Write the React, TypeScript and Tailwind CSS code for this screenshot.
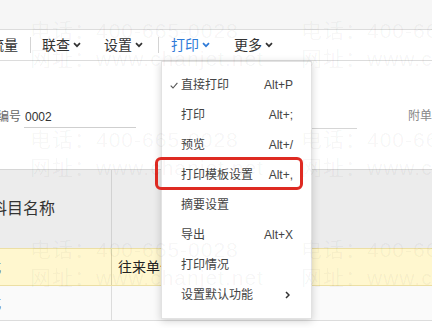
import React from "react";

const FONT = '"Liberation Sans", "Noto Sans CJK SC", sans-serif';

function Chevron({ color = "#333" }: { color?: string }) {
  return (
    <svg width="8" height="6" viewBox="0 0 8 6" className="ml-[3px]">
      <path d="M1 1.2 L4 4.2 L7 1.2" fill="none" stroke={color} strokeWidth="1.7" />
    </svg>
  );
}

function Sep() {
  return <div className="w-px h-[16px] bg-[#d4d4d4]" />;
}

type Item = { label: string; key?: string; check?: boolean; sub?: boolean };

const items: Item[] = [
  { label: "直接打印", key: "Alt+P", check: true },
  { label: "打印", key: "Alt+;" },
  { label: "预览", key: "Alt+/" },
  { label: "打印模板设置", key: "Alt+," },
  { label: "摘要设置" },
  { label: "导出", key: "Alt+X" },
  { label: "打印情况" },
  { label: "设置默认功能", sub: true },
];

function Watermark() {
  const cols = [30, 301];
  const rows = [31, 140, 250];
  return (
    <div className="absolute inset-0 pointer-events-none">
      {rows.map((y) =>
        cols.map((x) => (
          <React.Fragment key={`${x}-${y}`}>
            <div
              className="absolute whitespace-nowrap text-[21px] leading-none tracking-[1px] text-[rgba(0,0,0,0.045)]"
              style={{ left: x, top: y - 11 }}
            >
              电话：400-665-0028
            </div>
            <div
              className="absolute whitespace-nowrap text-[21px] leading-none tracking-[1px] text-[rgba(0,0,0,0.045)]"
              style={{ left: x, top: y + 28 - 11 }}
            >
              网址：www.chanjet.net
            </div>
          </React.Fragment>
        ))
      )}
    </div>
  );
}

export default function App() {
  return (
    <div
      className="relative w-[432px] h-[328px] overflow-hidden bg-white text-[#333]"
      style={{ fontFamily: FONT }}
    >
      {/* top band */}
      <div className="h-[29px] bg-[#f6f6f6]" />

      {/* toolbar */}
      <div className="h-[32px] border-y border-[#dcdcdc] flex items-center text-[14px] text-[#333] whitespace-nowrap">
        <span className="ml-[-10px]">流量</span>
        <div className="ml-[12px]"><Sep /></div>
        <span className="ml-[11px] flex items-center">联查<Chevron /></span>
        <span className="ml-[23px] flex items-center">设置<Chevron /></span>
        <div className="ml-[15px]"><Sep /></div>
        <span className="ml-[12px] flex items-center text-[#2f7bd8]">打印<Chevron color="#2f7bd8" /></span>
        <span className="ml-[24px] flex items-center">更多<Chevron /></span>
      </div>

      {/* form area */}
      <div className="h-[108px] pt-[45px] text-[12px] whitespace-nowrap">
        <div className="flex items-start">
          <div className="shrink-0 ml-[-3px] w-[27px] h-[22px] flex items-center text-[#666]">编号</div>
          <div className="shrink-0 w-[112px] h-[22px] border-b border-[#cfcfcf] flex items-center pl-[1px] text-[#333]">0002</div>
          <div className="shrink-0 ml-[44px] w-[177px] h-[23px] border-b border-[#d6d6d6]" />
          <div className="shrink-0 ml-[51px] h-[20px] flex items-center text-[#888]">附单据</div>
        </div>
      </div>

      {/* table */}
      <div className="border-t border-[#d6d6d6]">
        <div className="h-[78px] bg-[#ececec] flex">
          <div className="w-[112px] border-r border-[#d2d2d2] flex items-center">
            <span className="ml-[-9px] text-[16px] text-[#333]">科目名称</span>
          </div>
          <div className="flex-1" />
        </div>
        <div className="h-[38px] bg-[#fff7cf] border-y border-[#ecdfa4] flex">
          <div className="w-[112px] border-r border-[#d8d0a8] flex items-center overflow-hidden">
            <span className="shrink-0 ml-[-13px] text-[14px] text-[#555]">式</span>
          </div>
          <div className="flex-1 flex items-center pl-[6px] text-[14px] text-[#222]">往来单位</div>
        </div>
        <div className="h-[35px] bg-[#fafafa] border-b border-[#dcdcdc] flex">
          <div className="w-[112px] border-r border-[#dcdcdc] flex items-center overflow-hidden">
            <span className="shrink-0 ml-[-13px] text-[14px] text-[#555]">式</span>
          </div>
          <div className="flex-1" />
        </div>
      </div>

      {/* dropdown menu */}
      <div className="absolute left-[161px] top-[61px] w-[151px] bg-white border border-[#e2e2e2] shadow-[0_2px_8px_rgba(0,0,0,0.18)] py-[8px] text-[12px] text-[#444] whitespace-nowrap">
        {items.map((it) => (
          <div key={it.label} className="h-[30px] flex items-center pl-[8px] pr-[18px]">
            <div className="w-[11px] flex items-center">
              {it.check && (
                <svg width="8" height="7" viewBox="0 0 8 7">
                  <path d="M0.7 3.6 L3 6 L7.4 0.8" fill="none" stroke="#555" strokeWidth="1.1" />
                </svg>
              )}
            </div>
            <span>{it.label}</span>
            {it.key && <span className="ml-auto">{it.key}</span>}
            {it.sub && (
              <svg width="5" height="8" viewBox="0 0 5 8" className="ml-auto mr-[3px]">
                <path d="M1 1 L4 4 L1 7" fill="none" stroke="#333" strokeWidth="1.5" />
              </svg>
            )}
          </div>
        ))}
      </div>

      {/* red annotation box */}
      <div className="absolute left-[155px] top-[157px] w-[148px] h-[33px] border-[3px] border-[#de2a22] rounded-[6px] pointer-events-none" />

      <Watermark />
    </div>
  );
}
